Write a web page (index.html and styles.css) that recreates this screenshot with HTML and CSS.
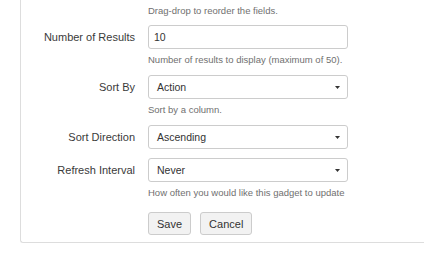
FILE: index.html
```html
<!DOCTYPE html>
<html>
<head>
<meta charset="utf-8">
<link rel="stylesheet" href="styles.css">
</head>
<body>
<div class="panel">
  <div class="row">
    <div class="label"></div>
    <div class="field"><p class="help first">Drag-drop to reorder the fields.</p></div>
  </div>
  <div class="row">
    <label class="label">Number of Results</label>
    <div class="field">
      <input class="text" type="text" value="10">
      <p class="help">Number of results to display (maximum of 50).</p>
    </div>
  </div>
  <div class="row">
    <label class="label">Sort By</label>
    <div class="field">
      <div class="select"><span>Action</span><svg width="5" height="3" viewBox="0 0 5 3"><path d="M0 0H5L2.5 3Z" fill="#333"/></svg></div>
      <p class="help">Sort by a column.</p>
    </div>
  </div>
  <div class="row">
    <label class="label">Sort Direction</label>
    <div class="field">
      <div class="select"><span>Ascending</span><svg width="5" height="3" viewBox="0 0 5 3"><path d="M0 0H5L2.5 3Z" fill="#333"/></svg></div>
    </div>
  </div>
  <div class="row">
    <label class="label">Refresh Interval</label>
    <div class="field">
      <div class="select"><span>Never</span><svg width="5" height="3" viewBox="0 0 5 3"><path d="M0 0H5L2.5 3Z" fill="#333"/></svg></div>
      <p class="help">How often you would like this gadget to update</p>
    </div>
  </div>
  <div class="row buttons-row">
    <div class="label"></div>
    <div class="field buttons">
      <button class="btn">Save</button>
      <button class="btn">Cancel</button>
    </div>
  </div>
</div>
</body>
</html>
```

FILE: styles.css
```css
html, body {
  margin: 0;
  padding: 0;
  background: #fff;
}
body {
  font-family: "Liberation Sans", Arial, sans-serif;
  color: #333;
}
.panel {
  margin-left: 20px;
  border-left: 1px solid #dddddd;
  border-bottom: 1px solid #dddddd;
  border-bottom-left-radius: 3px;
  padding-top: 4px;
  padding-bottom: 7px;
}
.row {
  display: grid;
  grid-template-columns: 114px 200px;
  column-gap: 13px;
  margin-bottom: 9px;
}
.row:first-child {
  margin-bottom: 8px;
}
.label {
  font-size: 11px;
  line-height: 24px;
  text-align: right;
  color: #3a3a3a;
}
.help {
  margin: 5px 0 0;
  font-size: 9.5px;
  line-height: 12px;
  color: #707070;
  white-space: nowrap;
}
.help.first {
  margin-top: 1px;
}
.text {
  box-sizing: border-box;
  display: block;
  width: 200px;
  height: 24px;
  margin: 0;
  padding: 0 5px;
  border: 1px solid #cccccc;
  border-radius: 3px;
  font-family: "Liberation Sans", Arial, sans-serif;
  font-size: 10.5px;
  color: #333;
  outline: none;
}
.select {
  box-sizing: border-box;
  display: flex;
  align-items: center;
  justify-content: space-between;
  width: 200px;
  height: 24px;
  padding: 0 7px 0 8px;
  border: 1px solid #cccccc;
  border-radius: 3px;
  font-size: 10.5px;
  color: #333;
}
.buttons-row {
  margin-top: 13px;
  margin-bottom: 0;
}
.buttons {
  display: flex;
  gap: 9px;
}
.btn {
  box-sizing: border-box;
  height: 23px;
  margin: 0;
  padding: 0 8px;
  border: 1px solid #cccccc;
  border-radius: 3px;
  background: #f2f2f2;
  font-family: "Liberation Sans", Arial, sans-serif;
  font-size: 11px;
  color: #333;
}
```
